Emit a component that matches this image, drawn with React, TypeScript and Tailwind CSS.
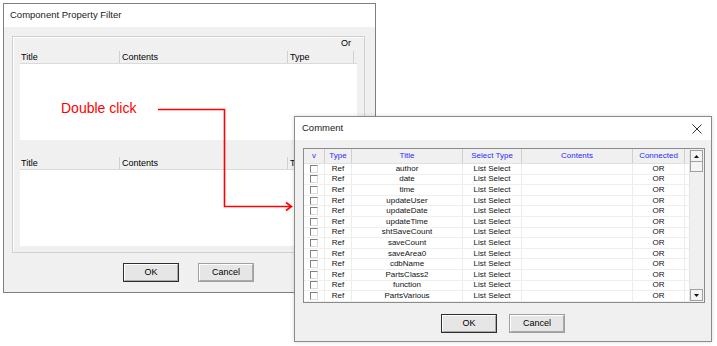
import React from "react";

const rows = [
  "author",
  "date",
  "time",
  "updateUser",
  "updateDate",
  "updateTime",
  "shtSaveCount",
  "saveCount",
  "saveArea0",
  "cdbName",
  "PartsClass2",
  "function",
  "PartsVarious",
];

const cols = [
  { label: "v", w: "w-[21px]" },
  { label: "Type", w: "w-[27px]" },
  { label: "Title", w: "w-[111px]" },
  { label: "Select Type", w: "w-[59px]" },
  { label: "Contents", w: "w-[111px]" },
  { label: "Connected", w: "w-[52px]" },
];

function WinButton({ label, primary }: { label: string; primary?: boolean }) {
  return (
    <div
      className={`w-[56px] h-[19px] border ${
        primary ? "border-[#2e2e2e]" : "border-[#a0a0a0]"
      } bg-[#e6e6e6]`}
    >
      <div className="h-full border border-t-white border-l-white border-r-[#a8a8a8] border-b-[#a8a8a8] flex items-center justify-center text-[9px] leading-none">
        {label}
      </div>
    </div>
  );
}

function FilterList() {
  return (
    <div className="flex flex-col">
      <div className="h-[13px] flex bg-[#f0f0f0] border-b border-[#dadada] text-[9px] leading-none">
        <div className="w-[100px] pl-[1px] flex items-center border-r border-[#d0d0d0]">Title</div>
        <div className="w-[168px] pl-[2px] flex items-center border-r border-[#d0d0d0]">Contents</div>
        <div className="w-[66px] pl-[2px] flex items-center border-r border-[#d0d0d0]">Type</div>
      </div>
      <div className="h-[76px] bg-white" />
    </div>
  );
}

function Checkbox() {
  return (
    <div className="w-[8px] h-[8px] border border-t-[#808080] border-l-[#808080] border-r-[#dcdcdc] border-b-[#dcdcdc] bg-white" />
  );
}

export default function App() {
  return (
    <div className="relative w-[717px] h-[346px] overflow-hidden bg-white text-black font-['Liberation_Sans',Arial,sans-serif]">
      {/* Component Property Filter window */}
      <div className="absolute left-[3px] top-[3px] w-[373px] h-[290px] flex flex-col border border-[#7f7f7f] bg-[#f0f0f0]">
        <div className="h-[23px] shrink-0 bg-white flex items-center pl-[6px] text-[9.5px] text-[#1a1a1a]">
          Component Property Filter
        </div>
        <div className="flex flex-col pl-[8px] pr-[10px] pt-[9px]">
          <div className="h-[217px] border border-[#d0d0d0] shadow-[inset_1px_1px_0_#fff] px-[7px] flex flex-col">
            <div className="h-[14px] flex items-end justify-end pr-[6px] text-[9px] leading-none pb-[3px]">Or</div>
            <FilterList />
            <div className="h-[17px]" />
            <FilterList />
          </div>
          <div className="flex justify-center gap-[19px] mt-[10px]">
            <WinButton label="OK" primary />
            <WinButton label="Cancel" />
          </div>
        </div>
      </div>

      {/* Double click annotation */}
      <div className="absolute left-[61px] top-[101px] text-[14px] leading-none text-[#ff0000]">Double click</div>
      <svg className="absolute left-0 top-0 pointer-events-none" width="717" height="346">
        <path d="M158 109.5 H224.5 V206.5 H291" fill="none" stroke="#ff0000" strokeWidth="1.6" />
        <path d="M286 202.5 L291.5 206.5 L286 210.5" fill="none" stroke="#ff0000" strokeWidth="1.6" />
      </svg>

      {/* Comment window */}
      <div className="absolute left-[294px] top-[116px] w-[418px] h-[226px] flex flex-col border border-[#8a8a8a] bg-[#f0f0f0] shadow-[0_0_4px_rgba(0,0,0,0.15)]">
        <div className="h-[23px] shrink-0 bg-white flex items-center justify-between pl-[7px] pr-[9px] text-[9.5px] text-[#1a1a1a]">
          <span>Comment</span>
          <svg width="10" height="10" viewBox="0 0 10 10">
            <path d="M0.5 0.5 L9.5 9.5 M9.5 0.5 L0.5 9.5" stroke="#333" strokeWidth="1" />
          </svg>
        </div>
        <div className="flex flex-col px-[8px] pt-[8px]">
          <div className="w-[402px] h-[155px] border border-[#8c8c8c] flex bg-white">
            <div className="w-[385px] flex flex-col">
              <div className="h-[15px] flex bg-[#f0f0f0] border-b border-[#e0e0e0] text-[8px] leading-none text-[#2a2aff]">
                {cols.map((c) => (
                  <div key={c.label} className={`${c.w} flex items-center justify-center border-r border-[#d0d0d0]`}>
                    {c.label}
                  </div>
                ))}
              </div>
              {rows.map((r) => (
                <div key={r} className="h-[10.6px] flex border-b border-[#efefef] text-[8px] leading-none text-[#111]">
                  <div className="w-[21px] flex items-center justify-center border-r border-[#ececec]">
                    <Checkbox />
                  </div>
                  <div className="w-[27px] flex items-center justify-center border-r border-[#ececec]">Ref</div>
                  <div className="w-[111px] flex items-center justify-center border-r border-[#ececec]">{r}</div>
                  <div className="w-[59px] flex items-center justify-center border-r border-[#ececec]">List Select</div>
                  <div className="w-[111px] border-r border-[#ececec]" />
                  <div className="w-[52px] flex items-center justify-center border-r border-[#ececec]">OR</div>
                </div>
              ))}
            </div>
            <div className="w-[14px] flex flex-col py-[1px] bg-[#f0f0f0] border-l border-[#e4e4e4]">
              <div className="h-[12px] border border-[#a0a0a0] bg-[#f4f4f4] flex items-center justify-center">
                <svg width="5" height="3" viewBox="0 0 5 3">
                  <path d="M0 3 L2.5 0 L5 3 Z" fill="#111" />
                </svg>
              </div>
              <div className="h-[10px] border border-t-0 border-[#a0a0a0] bg-[#f4f4f4]" />
              <div className="flex-1" />
              <div className="h-[12px] border border-[#a0a0a0] bg-[#f4f4f4] flex items-center justify-center">
                <svg width="5" height="3" viewBox="0 0 5 3">
                  <path d="M0 0 L5 0 L2.5 3 Z" fill="#111" />
                </svg>
              </div>
            </div>
            <div className="w-[1px] bg-[#f0f0f0]" />
          </div>
          <div className="flex justify-center gap-[12px] mt-[11px]">
            <WinButton label="OK" primary />
            <WinButton label="Cancel" />
          </div>
        </div>
      </div>
    </div>
  );
}
